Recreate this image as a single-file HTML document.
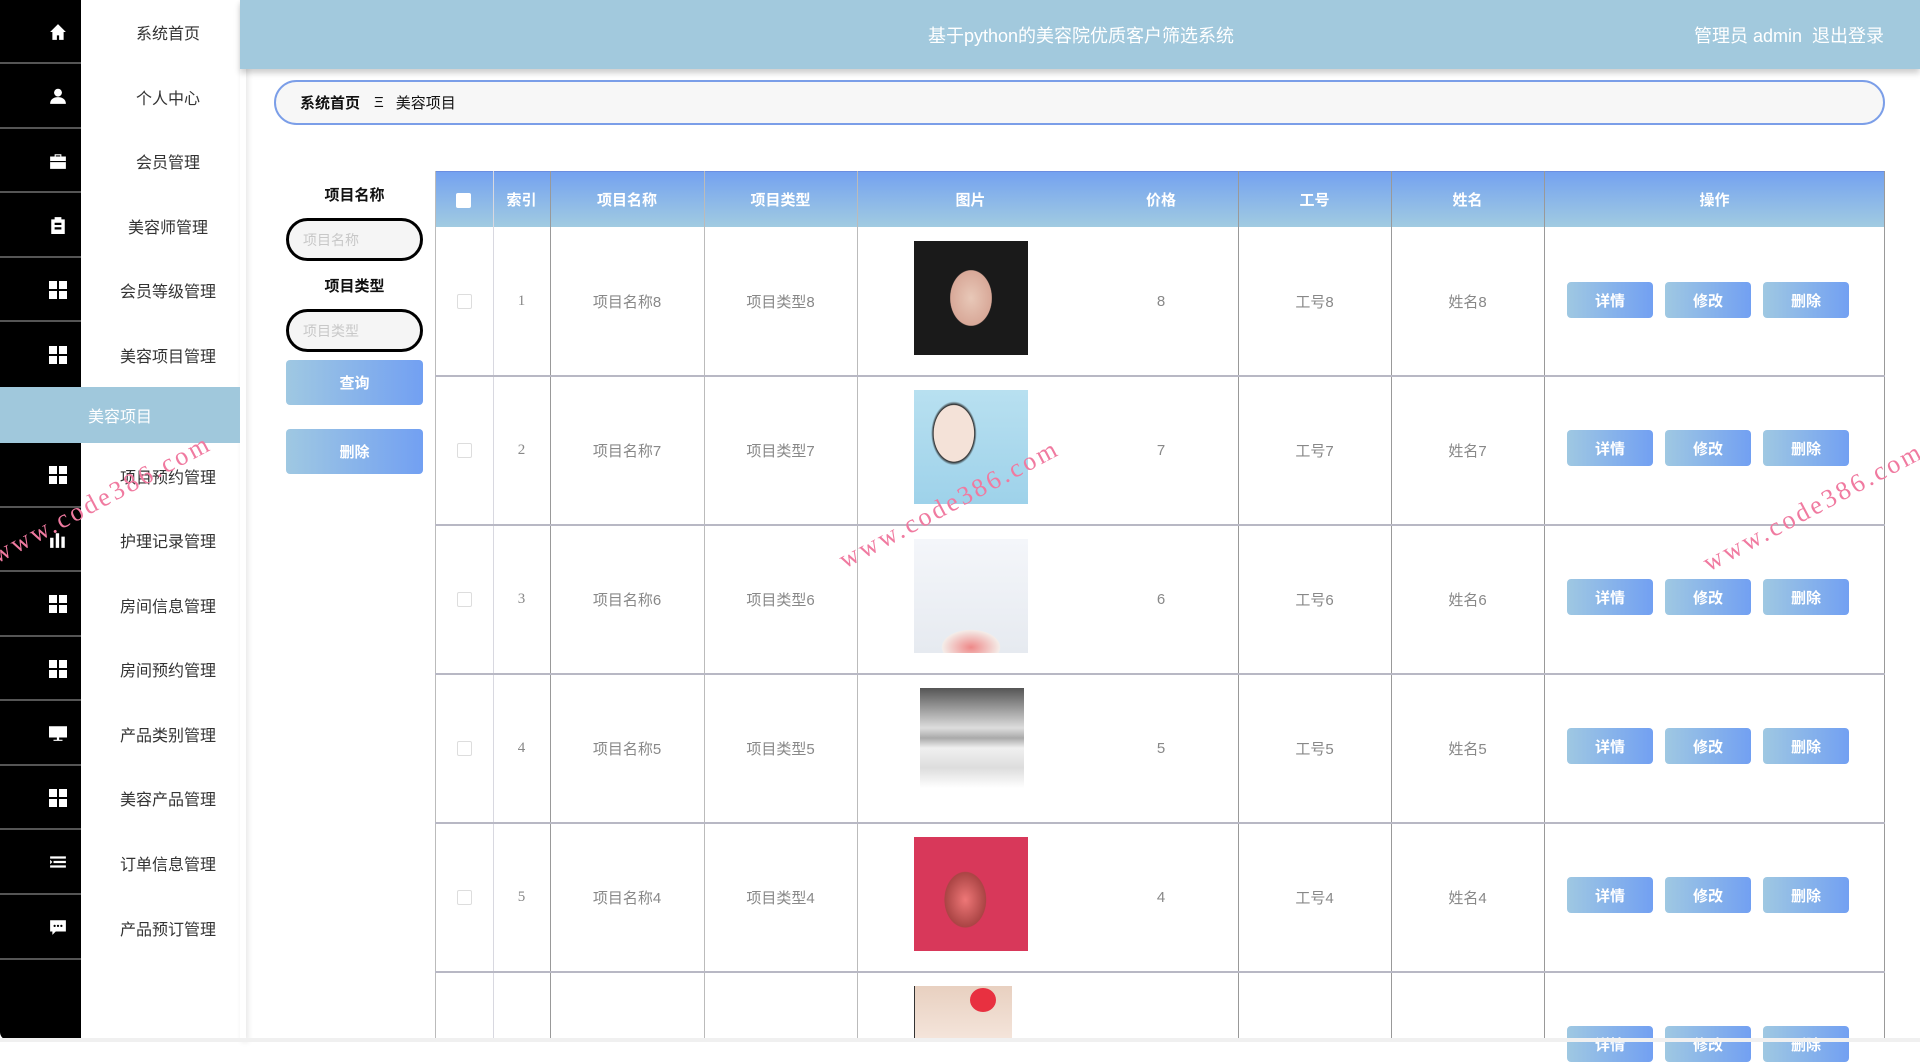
<!DOCTYPE html>
<html><head><meta charset="utf-8"><style>
*{margin:0;padding:0;box-sizing:border-box}
body{width:1920px;height:1042px;overflow:hidden;background:#fff;font-family:"Liberation Sans","Noto Sans CJK SC",sans-serif;position:relative}
.abs{position:absolute}
.black{left:0;width:81px;background:#000;border-bottom:2px solid #555}
.item{left:81px;width:174px;text-align:center;font-size:16px;color:#333;display:flex;align-items:center;justify-content:center}
.ic{position:absolute;left:49px;width:18px;height:18px}
.g{display:grid;grid-template-columns:8px 8px;gap:2px}
.g i{background:#fff;display:block;width:8px;height:8px}
.hdr{left:240px;top:0;width:1680px;height:69px;background:#a2c9dd;box-shadow:0 4px 6px rgba(0,0,0,.2)}
.btn{background:linear-gradient(90deg,#9fc8e2,#72a0f2);color:#fff;font-weight:bold;font-size:15px;border-radius:4px;display:flex;align-items:center;justify-content:center}
.inp{border:3px solid #000;border-radius:24px;background:#f5f5f5;color:#c8c8c8;font-size:14px;padding-left:14px;display:flex;align-items:center}
.lbl{font-weight:bold;font-size:15px;color:#111;text-align:center;width:137px}
.th{top:171px;height:56px;color:#fff;font-weight:bold;font-size:15px;display:flex;align-items:center;justify-content:center;background:linear-gradient(180deg,#74a2f0,#a1cbe1)}
.cell{font-size:15px;color:#888;display:flex;align-items:center;justify-content:center}
.vl{width:1px;background:#999}
.hl{height:2px;background:#b8b8c4;left:435px;width:1450px}
.wm{font-family:"Liberation Serif",serif;color:#f07aa0;font-size:26px;letter-spacing:3px;transform:rotate(-28deg);transform-origin:left bottom;white-space:nowrap}
</style></head><body>
<div class="abs" style="left:240px;top:0;width:6px;height:1042px;box-shadow:2px 0 6px rgba(0,0,0,.1)"></div>
<div class="abs black" style="top:0;height:64px"></div><div class="abs item" style="top:0;height:64px">系统首页</div>
<div class="abs black" style="top:64px;height:65px"></div><div class="abs item" style="top:64px;height:65px">个人中心</div>
<div class="abs black" style="top:129px;height:64px"></div><div class="abs item" style="top:129px;height:64px">会员管理</div>
<div class="abs black" style="top:193px;height:65px"></div><div class="abs item" style="top:193px;height:65px">美容师管理</div>
<div class="abs black" style="top:258px;height:64px"></div><div class="abs item" style="top:258px;height:64px">会员等级管理</div>
<div class="abs black" style="top:322px;height:65px;border:none"></div><div class="abs item" style="top:322px;height:65px">美容项目管理</div>
<div class="abs" style="left:0;top:387px;width:240px;height:56px;background:#a0c8dc;color:#fff;font-size:16px;display:flex;align-items:center;padding-left:88px">美容项目</div>
<div class="abs black" style="top:443px;height:65px"></div><div class="abs item" style="top:443px;height:65px">项目预约管理</div>
<div class="abs black" style="top:508px;height:64px"></div><div class="abs item" style="top:508px;height:64px">护理记录管理</div>
<div class="abs black" style="top:572px;height:65px"></div><div class="abs item" style="top:572px;height:65px">房间信息管理</div>
<div class="abs black" style="top:637px;height:64px"></div><div class="abs item" style="top:637px;height:64px">房间预约管理</div>
<div class="abs black" style="top:701px;height:65px"></div><div class="abs item" style="top:701px;height:65px">产品类别管理</div>
<div class="abs black" style="top:766px;height:64px"></div><div class="abs item" style="top:766px;height:64px">美容产品管理</div>
<div class="abs black" style="top:830px;height:65px"></div><div class="abs item" style="top:830px;height:65px">订单信息管理</div>
<div class="abs black" style="top:895px;height:65px"></div><div class="abs item" style="top:895px;height:65px">产品预订管理</div>
<div class="abs black" style="top:960px;height:80px;border:none;border-bottom-left-radius:8px"></div>
<svg class="ic" style="top:23px" viewBox="0 0 16 16"><path d="M8 1L1 8h2v7h4v-4h2v4h4V8h2z" fill="#fff"/></svg>
<svg class="ic" style="top:87px" viewBox="0 0 16 16"><circle cx="8" cy="5" r="3.5" fill="#fff"/><path d="M1 15c0-4 3-6 7-6s7 2 7 6z" fill="#fff"/></svg>
<svg class="ic" style="top:152px" viewBox="0 0 16 16"><path d="M5 4V2h6v2h4v11H1V4zM6 4h4V3H6z" fill="#fff"/><rect x="1" y="8" width="14" height="1" fill="#000"/></svg>
<svg class="ic" style="top:216px" viewBox="0 0 16 16"><path d="M2 3h3V1h6v2h3v13H2z" fill="#fff"/><path d="M5 6h6v2H5zM5 10h6v2H5z" fill="#000"/></svg>
<div class="ic g" style="top:281px"><i></i><i></i><i></i><i></i></div>
<div class="ic g" style="top:346px"><i></i><i></i><i></i><i></i></div>
<div class="ic g" style="top:466px"><i></i><i></i><i></i><i></i></div>
<svg class="ic" style="top:531px" viewBox="0 0 16 16"><path d="M1 6h3v9H1zM6 2h3v13H6zM11 5h3v10h-3z" fill="#fff"/></svg>
<div class="ic g" style="top:595px"><i></i><i></i><i></i><i></i></div>
<div class="ic g" style="top:660px"><i></i><i></i><i></i><i></i></div>
<svg class="ic" style="top:724px" viewBox="0 0 16 16"><path d="M0 2h16v10H0zM7 12h2v2h3v1H4v-1h3z" fill="#fff"/></svg>
<div class="ic g" style="top:789px"><i></i><i></i><i></i><i></i></div>
<svg class="ic" style="top:853px" viewBox="0 0 16 16"><path d="M1 3h14v2H1zM4 7h11v2H4zM1 11h14v2H1z" fill="#fff"/><path d="M1 6l2 2-2 2z" fill="#fff"/></svg>
<svg class="ic" style="top:918px" viewBox="0 0 16 16"><path d="M1 2h14v10H6l-3 3v-3H1z" fill="#fff"/><circle cx="5" cy="7" r="1" fill="#000"/><circle cx="8" cy="7" r="1" fill="#000"/><circle cx="11" cy="7" r="1" fill="#000"/></svg>
<div class="abs hdr"></div>
<div class="abs" style="left:928px;top:22px;color:#fff;font-size:18px">基于python的美容院优质客户筛选系统</div>
<div class="abs" style="left:1694px;top:22px;color:#fff;font-size:18px">管理员 admin &nbsp;退出登录</div>
<div class="abs" style="left:274px;top:80px;width:1611px;height:45px;border:2px solid #7b9ee8;border-radius:24px;background:#f7f7f7;display:flex;align-items:center;padding-left:24px;font-size:15px;color:#111"><b>系统首页</b><span style="margin:0 12px 0 14px">Ξ</span>美容项目</div>
<div class="abs lbl" style="left:286px;top:184px">项目名称</div>
<div class="abs inp" style="left:286px;top:218px;width:137px;height:43px">项目名称</div>
<div class="abs lbl" style="left:286px;top:275px">项目类型</div>
<div class="abs inp" style="left:286px;top:309px;width:137px;height:43px">项目类型</div>
<div class="abs btn" style="left:286px;top:360px;width:137px;height:45px">查询</div>
<div class="abs btn" style="left:286px;top:429px;width:137px;height:45px">删除</div>
<div class="abs th" style="left:435px;width:1450px;border-top:1px solid #6b8ee0"></div>
<div class="abs" style="left:456px;top:193px;width:15px;height:15px;background:#fff;border-radius:2px"></div>
<div class="abs th" style="left:493px;width:57px;background:none">索引</div>
<div class="abs th" style="left:550px;width:154px;background:none">项目名称</div>
<div class="abs th" style="left:704px;width:153px;background:none">项目类型</div>
<div class="abs th" style="left:857px;width:227px;background:none">图片</div>
<div class="abs th" style="left:1084px;width:154px;background:none">价格</div>
<div class="abs th" style="left:1238px;width:153px;background:none">工号</div>
<div class="abs th" style="left:1391px;width:153px;background:none">姓名</div>
<div class="abs th" style="left:1544px;width:341px;background:none">操作</div>
<div class="abs vl" style="left:435px;top:171px;height:871px;background:#bbb"></div>
<div class="abs vl" style="left:493px;top:171px;height:871px;background:#d8d8e0"></div>
<div class="abs vl" style="left:550px;top:171px;height:871px"></div>
<div class="abs vl" style="left:704px;top:171px;height:871px;background:#bbb"></div>
<div class="abs vl" style="left:857px;top:171px;height:871px;background:#bbb"></div>
<div class="abs vl" style="left:1238px;top:171px;height:871px"></div>
<div class="abs vl" style="left:1391px;top:171px;height:871px"></div>
<div class="abs vl" style="left:1544px;top:171px;height:871px"></div>
<div class="abs vl" style="left:1884px;top:171px;height:871px"></div>
<div class="abs hl" style="top:375px"></div>
<div class="abs hl" style="top:524px"></div>
<div class="abs hl" style="top:673px"></div>
<div class="abs hl" style="top:822px"></div>
<div class="abs hl" style="top:971px"></div>
<div class="abs" style="left:914px;top:241px;width:114px;height:114px;background:radial-gradient(ellipse 30% 40% at 50% 50%,#e8c8b8,#d8a898 60%,#1a1a1a 62%)"></div>
<div class="abs" style="left:914px;top:390px;width:114px;height:114px;background:radial-gradient(ellipse 25% 35% at 35% 38%,#f4e2d8 70%,#2a2a2a 72%,transparent 80%),linear-gradient(#b8e0f0,#9ed2ea)"></div>
<div class="abs" style="left:914px;top:539px;width:114px;height:114px;background:radial-gradient(ellipse 50% 30% at 50% 95%,#e88 0,#f4ece8 50%,transparent 52%),linear-gradient(#f4f6fa,#e6eaf0)"></div>
<div class="abs" style="left:920px;top:688px;width:104px;height:100px;background:linear-gradient(#555 0,#ddd 40%,#aaa 50%,#f0f0f0 60%,#ddd 80%,#fff 100%)"></div>
<div class="abs" style="left:914px;top:837px;width:114px;height:114px;background:radial-gradient(ellipse 30% 40% at 45% 55%,#e77 0,#a44 60%,transparent 62%),#d8385a"></div>
<div class="abs" style="left:914px;top:986px;width:98px;height:52px;background:linear-gradient(180deg,#e8d0c0,#f4e4da);border-left:1px solid #333"></div>
<div class="abs" style="left:970px;top:988px;width:26px;height:24px;border-radius:50%;background:#e83040"></div>

<div class="abs cell" style="left:435px;top:227px;width:58px;height:149px"><span style="width:15px;height:15px;border:1px solid #ddd;border-radius:2px"></span></div>
<div class="abs cell" style="left:493px;top:227px;width:57px;height:149px;font-family:'Liberation Serif',serif">1</div>
<div class="abs cell" style="left:550px;top:227px;width:154px;height:149px">项目名称8</div>
<div class="abs cell" style="left:704px;top:227px;width:153px;height:149px">项目类型8</div>
<div class="abs cell" style="left:1084px;top:227px;width:154px;height:149px">8</div>
<div class="abs cell" style="left:1238px;top:227px;width:153px;height:149px">工号8</div>
<div class="abs cell" style="left:1391px;top:227px;width:153px;height:149px">姓名8</div>
<div class="abs btn" style="left:1567px;top:282px;width:86px;height:36px">详情</div><div class="abs btn" style="left:1665px;top:282px;width:86px;height:36px">修改</div><div class="abs btn" style="left:1763px;top:282px;width:86px;height:36px">删除</div>

<div class="abs cell" style="left:435px;top:376px;width:58px;height:149px"><span style="width:15px;height:15px;border:1px solid #ddd;border-radius:2px"></span></div>
<div class="abs cell" style="left:493px;top:376px;width:57px;height:149px;font-family:'Liberation Serif',serif">2</div>
<div class="abs cell" style="left:550px;top:376px;width:154px;height:149px">项目名称7</div>
<div class="abs cell" style="left:704px;top:376px;width:153px;height:149px">项目类型7</div>
<div class="abs cell" style="left:1084px;top:376px;width:154px;height:149px">7</div>
<div class="abs cell" style="left:1238px;top:376px;width:153px;height:149px">工号7</div>
<div class="abs cell" style="left:1391px;top:376px;width:153px;height:149px">姓名7</div>
<div class="abs btn" style="left:1567px;top:430px;width:86px;height:36px">详情</div><div class="abs btn" style="left:1665px;top:430px;width:86px;height:36px">修改</div><div class="abs btn" style="left:1763px;top:430px;width:86px;height:36px">删除</div>

<div class="abs cell" style="left:435px;top:525px;width:58px;height:149px"><span style="width:15px;height:15px;border:1px solid #ddd;border-radius:2px"></span></div>
<div class="abs cell" style="left:493px;top:525px;width:57px;height:149px;font-family:'Liberation Serif',serif">3</div>
<div class="abs cell" style="left:550px;top:525px;width:154px;height:149px">项目名称6</div>
<div class="abs cell" style="left:704px;top:525px;width:153px;height:149px">项目类型6</div>
<div class="abs cell" style="left:1084px;top:525px;width:154px;height:149px">6</div>
<div class="abs cell" style="left:1238px;top:525px;width:153px;height:149px">工号6</div>
<div class="abs cell" style="left:1391px;top:525px;width:153px;height:149px">姓名6</div>
<div class="abs btn" style="left:1567px;top:579px;width:86px;height:36px">详情</div><div class="abs btn" style="left:1665px;top:579px;width:86px;height:36px">修改</div><div class="abs btn" style="left:1763px;top:579px;width:86px;height:36px">删除</div>

<div class="abs cell" style="left:435px;top:674px;width:58px;height:149px"><span style="width:15px;height:15px;border:1px solid #ddd;border-radius:2px"></span></div>
<div class="abs cell" style="left:493px;top:674px;width:57px;height:149px;font-family:'Liberation Serif',serif">4</div>
<div class="abs cell" style="left:550px;top:674px;width:154px;height:149px">项目名称5</div>
<div class="abs cell" style="left:704px;top:674px;width:153px;height:149px">项目类型5</div>
<div class="abs cell" style="left:1084px;top:674px;width:154px;height:149px">5</div>
<div class="abs cell" style="left:1238px;top:674px;width:153px;height:149px">工号5</div>
<div class="abs cell" style="left:1391px;top:674px;width:153px;height:149px">姓名5</div>
<div class="abs btn" style="left:1567px;top:728px;width:86px;height:36px">详情</div><div class="abs btn" style="left:1665px;top:728px;width:86px;height:36px">修改</div><div class="abs btn" style="left:1763px;top:728px;width:86px;height:36px">删除</div>

<div class="abs cell" style="left:435px;top:823px;width:58px;height:149px"><span style="width:15px;height:15px;border:1px solid #ddd;border-radius:2px"></span></div>
<div class="abs cell" style="left:493px;top:823px;width:57px;height:149px;font-family:'Liberation Serif',serif">5</div>
<div class="abs cell" style="left:550px;top:823px;width:154px;height:149px">项目名称4</div>
<div class="abs cell" style="left:704px;top:823px;width:153px;height:149px">项目类型4</div>
<div class="abs cell" style="left:1084px;top:823px;width:154px;height:149px">4</div>
<div class="abs cell" style="left:1238px;top:823px;width:153px;height:149px">工号4</div>
<div class="abs cell" style="left:1391px;top:823px;width:153px;height:149px">姓名4</div>
<div class="abs btn" style="left:1567px;top:877px;width:86px;height:36px">详情</div><div class="abs btn" style="left:1665px;top:877px;width:86px;height:36px">修改</div><div class="abs btn" style="left:1763px;top:877px;width:86px;height:36px">删除</div>

<div class="abs btn" style="left:1567px;top:1026px;width:86px;height:36px">详情</div><div class="abs btn" style="left:1665px;top:1026px;width:86px;height:36px">修改</div><div class="abs btn" style="left:1763px;top:1026px;width:86px;height:36px">删除</div>
<div class="abs" style="left:0;top:1038px;width:1920px;height:4px;background:#f0f0f0;z-index:5"></div>
<div class="abs wm" style="left:0;top:540px">www.code386.com</div>
<div class="abs wm" style="left:848px;top:545px">www.code386.com</div>
<div class="abs wm" style="left:1712px;top:548px">www.code386.com</div>
</body></html>
